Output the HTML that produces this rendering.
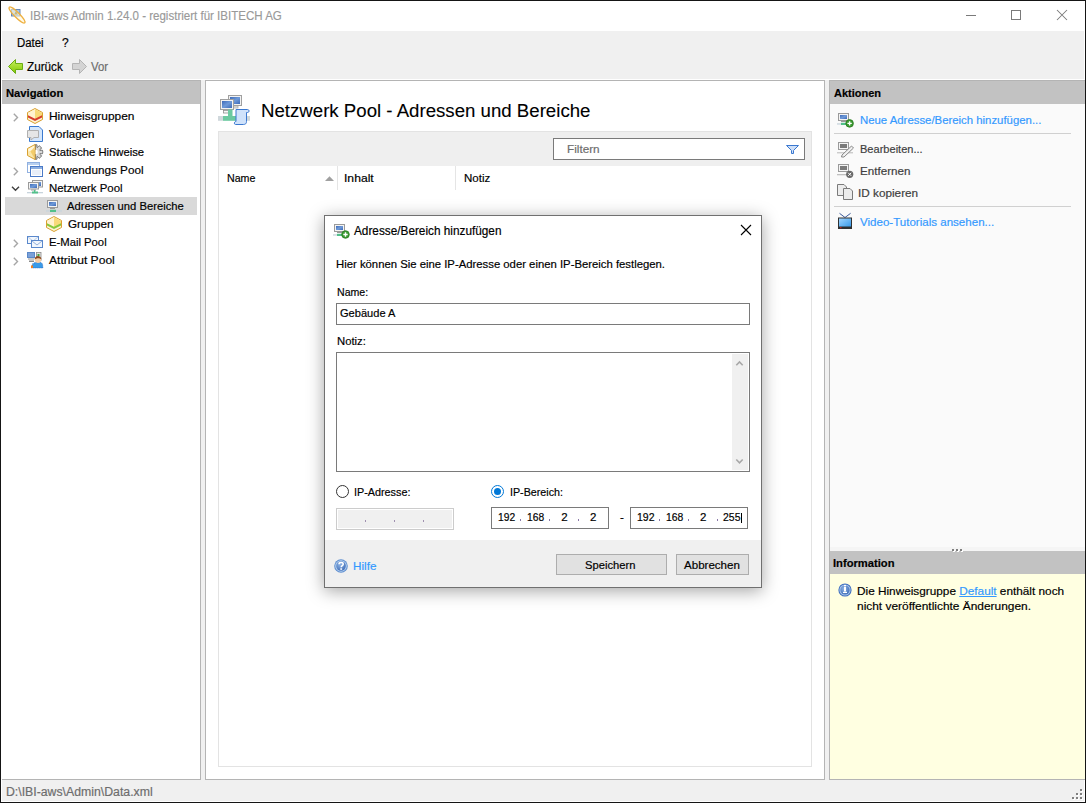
<!DOCTYPE html>
<html><head><meta charset="utf-8"><style>
html,body{margin:0;padding:0;width:1086px;height:803px;overflow:hidden;background:#f0f0f0}
.b{position:absolute}
.t{position:absolute;white-space:pre;font-family:'Liberation Sans';-webkit-text-stroke:0.18px currentColor}
svg{position:absolute;overflow:visible}
</style></head><body>
<div class="b" style="left:0px;top:0px;width:1086px;height:803px;background:#151515"></div>
<div class="b" style="left:1px;top:1px;width:1084px;height:801px;background:#fff"></div>
<div class="b" style="left:2px;top:31px;width:1082px;height:770px;background:#f0f0f0"></div>
<div class="b" style="left:2px;top:79px;width:1082px;height:1px;background:#fff"></div>
<div class="b" style="left:2px;top:80px;width:199px;height:700px;background:#fff;border-top:1px solid #b4b4b4;border-right:1px solid #b4b4b4;border-bottom:1px solid #b4b4b4;box-sizing:border-box"></div>
<div class="b" style="left:2px;top:81px;width:198px;height:23px;background:#c2c2c2"></div>
<div class="b" style="left:5px;top:197px;width:192px;height:18px;background:#d9d9d9"></div>
<div class="b" style="left:205px;top:80px;width:620px;height:700px;background:#fff;border:1px solid #b4b4b4;box-sizing:border-box"></div>
<div class="b" style="left:218px;top:131px;width:594px;height:636px;border:1px solid #e3e3e3;box-sizing:border-box"></div>
<div class="b" style="left:219px;top:132px;width:592px;height:34px;background:#efefef"></div>
<div class="b" style="left:553px;top:138px;width:252px;height:22px;background:#fff;border:1px solid #7a7a7a;box-sizing:border-box"></div>
<div class="b" style="left:337px;top:166px;width:1px;height:24px;background:#e5e5e5"></div>
<div class="b" style="left:455px;top:166px;width:1px;height:24px;background:#e5e5e5"></div>
<div class="b" style="left:829px;top:80px;width:256px;height:467px;background:#fafafa;border-top:1px solid #b4b4b4;border-left:1px solid #b4b4b4;box-sizing:border-box"></div>
<div class="b" style="left:830px;top:81px;width:255px;height:23px;background:#c2c2c2"></div>
<div class="b" style="left:834px;top:133px;width:237px;height:1px;background:#d0d0d0"></div>
<div class="b" style="left:834px;top:206px;width:237px;height:1px;background:#d0d0d0"></div>
<div class="b" style="left:829px;top:547px;width:256px;height:4px;background:#f5f5f5;border-left:1px solid #b4b4b4;box-sizing:border-box"></div>
<div class="b" style="left:829px;top:551px;width:256px;height:229px;background:#ffffe1;border-left:1px solid #b4b4b4;border-bottom:1px solid #b4b4b4;box-sizing:border-box"></div>
<div class="b" style="left:830px;top:551px;width:255px;height:23px;background:#c2c2c2"></div>
<div class="b" style="left:324px;top:215px;width:438px;height:373px;background:#fff;border:1px solid #707070;box-sizing:border-box;box-shadow:0 3px 16px rgba(0,0,0,0.36)"></div>
<div class="b" style="left:325px;top:540px;width:436px;height:47px;background:#f0f0f0"></div>
<div class="b" style="left:336px;top:303px;width:414px;height:22px;border:1px solid #7a7a7a;box-sizing:border-box"></div>
<div class="b" style="left:336px;top:352px;width:414px;height:120px;border:1px solid #7a7a7a;box-sizing:border-box"></div>
<div class="b" style="left:732px;top:354px;width:16px;height:116px;background:#f0f0f0"></div>
<div class="b" style="left:336px;top:508px;width:118px;height:22px;border:1px solid #cccccc;background:#f0f0f0;box-sizing:border-box;box-shadow:inset 0 0 0 1px #fff"></div>
<div class="b" style="left:491px;top:507px;width:118px;height:22px;border:1px solid #7a7a7a;background:#fff;box-sizing:border-box"></div>
<div class="b" style="left:630px;top:507px;width:118px;height:22px;border:1px solid #7a7a7a;background:#fff;box-sizing:border-box"></div>
<div class="b" style="left:556px;top:554px;width:111px;height:21px;border:1px solid #adadad;background:#e1e1e1;box-sizing:border-box"></div>
<div class="b" style="left:676px;top:554px;width:73px;height:21px;border:1px solid #adadad;background:#e1e1e1;box-sizing:border-box"></div>

<svg width="1086" height="803" style="left:0;top:0">
<defs>
<linearGradient id="gGreen" x1="0" y1="0" x2="0" y2="1"><stop offset="0" stop-color="#c8f060"/><stop offset="1" stop-color="#80c800"/></linearGradient>
<linearGradient id="gScreen" x1="0" y1="0" x2="1" y2="1"><stop offset="0" stop-color="#3d6ab8"/><stop offset="0.5" stop-color="#6f9ad8"/><stop offset="1" stop-color="#3d6ab8"/></linearGradient>
<linearGradient id="gBox" x1="0" y1="0" x2="0" y2="1"><stop offset="0" stop-color="#fff4c0"/><stop offset="1" stop-color="#f0c040"/></linearGradient>
<radialGradient id="gBlue" cx="0.4" cy="0.35" r="0.7"><stop offset="0" stop-color="#8fb4e4"/><stop offset="1" stop-color="#3f6db8"/></radialGradient>
<linearGradient id="gTV" x1="0" y1="0" x2="1" y2="1"><stop offset="0" stop-color="#9fd4ff"/><stop offset="1" stop-color="#3a9ae8"/></linearGradient>
</defs>
<!-- title bar app icon -->
<g>
 <rect x="11.5" y="9.5" width="8.5" height="6.5" fill="#a9c9ec" stroke="#5f82b0" stroke-width="0.9"/>
 <path d="M14.2 14.5 L16 10.8 L17.8 14.5 Z" fill="#7a6a18"/>
 <ellipse cx="17" cy="15" rx="11" ry="2.5" transform="rotate(45 17 15)" fill="rgba(255,245,215,0.55)" stroke="#eeb040" stroke-width="1.3"/>
</g>
<!-- title bar buttons -->
<path d="M966 15.5 H976" stroke="#7a7a7a" stroke-width="1"/>
<rect x="1011.5" y="10.5" width="9" height="9" fill="none" stroke="#7a7a7a" stroke-width="1"/>
<path d="M1057 10 L1067 20 M1067 10 L1057 20" stroke="#7a7a7a" stroke-width="1.05"/>
<!-- toolbar arrows -->
<path d="M8.5 66.5 L15.5 59.5 L15.5 63.5 L22.5 63.5 L22.5 69.5 L15.5 69.5 L15.5 73.5 Z" fill="url(#gGreen)" stroke="#6aac14" stroke-width="1" stroke-linejoin="miter"/>
<path d="M86.5 66.5 L79.5 59.5 L79.5 63.5 L72.5 63.5 L72.5 69.5 L79.5 69.5 L79.5 73.5 Z" fill="#d4d4d4" stroke="#b4b4b4" stroke-width="1"/>
<!-- tree chevrons -->
<g fill="none" stroke="#a6a6a6" stroke-width="1.4">
 <path d="M13.8 113.8 L17.5 117.5 L13.8 121.2"/>
 <path d="M13.8 167.8 L17.5 171.5 L13.8 175.2"/>
 <path d="M13.8 239.8 L17.5 243.5 L13.8 247.2"/>
 <path d="M13.8 257.8 L17.5 261.5 L13.8 265.2"/>
</g>
<path d="M12 186.8 L15.5 190.3 L19 186.8" fill="none" stroke="#404040" stroke-width="1.4"/>
<!-- Hinweisgruppen icon -->
<g>
 <path d="M35 108.5 L42.5 112.5 L42.5 119.5 L35 123.5 L27.5 119.5 L27.5 112.5 Z" fill="#fdf3cf" stroke="#d9a030" stroke-width="1"/>
 <path d="M35 109.3 L42 113 L42 116 L35 119.5 Z" fill="#f8da78"/>
 <path d="M35 109.3 L28 113 L28 116 L35 119.5 Z" fill="#fff2cf"/>
 <path d="M28 115.3 L35 118.8 L42 115.3 L42 117.6 L35 121.1 L28 117.6 Z" fill="#d63c2c"/>
</g>
<!-- Vorlagen icon -->
<g>
 <path d="M29.5 126.5 H39 L42.5 130 V141.5 H29.5 Z" fill="#d4e6fb" stroke="#3a7ad0" stroke-width="1"/>
 <path d="M27.5 130.5 H38.5 V137.5 H34 L31 140 V137.5 H27.5 Z" fill="#e6e6e6" stroke="#b0b0b0" stroke-width="1"/>
</g>
<!-- Statische Hinweise icon -->
<g>
 <path d="M35.30 144.60 L35.30 144.60 L35.43 144.60 L35.56 144.60 L35.69 144.61 L35.82 144.62 L35.94 144.63 L36.07 144.64 L36.20 144.66 L36.33 144.67 L36.46 144.69 L36.58 144.71 L36.71 144.74 L36.84 144.76 L36.96 144.79 L36.99 145.21 L37.01 145.62 L37.01 146.04 L37.00 146.45 L36.97 146.86 L36.93 147.27 L37.01 147.30 L37.09 147.33 L37.17 147.36 L37.25 147.40 L37.33 147.43 L37.41 147.47 L37.49 147.51 L37.75 147.19 L38.02 146.88 L38.31 146.58 L38.60 146.28 L38.91 146.00 L39.22 145.72 L39.33 145.79 L39.44 145.87 L39.54 145.94 L39.65 146.01 L39.75 146.09 L39.86 146.17 L39.96 146.25 L40.06 146.33 L40.15 146.42 L40.25 146.50 L40.35 146.59 L40.44 146.68 L40.53 146.77 L40.62 146.86 L40.71 146.95 L40.80 147.05 L40.88 147.15 L40.97 147.24 L41.05 147.34 L41.13 147.44 L41.21 147.55 L41.29 147.65 L41.36 147.76 L41.43 147.86 L41.51 147.97 L41.58 148.08 L41.30 148.39 L41.02 148.70 L40.72 148.99 L40.42 149.28 L40.11 149.55 L39.79 149.81 L39.83 149.89 L39.87 149.97 L39.90 150.05 L39.94 150.13 L39.97 150.21 L40.00 150.29 L40.03 150.37 L40.44 150.33 L40.85 150.30 L41.26 150.29 L41.68 150.29 L42.09 150.31 L42.51 150.34 L42.54 150.46 L42.56 150.59 L42.59 150.72 L42.61 150.84 L42.63 150.97 L42.64 151.10 L42.66 151.23 L42.67 151.36 L42.68 151.48 L42.69 151.61 L42.70 151.74 L42.70 151.87 L42.70 152.00 L42.70 152.13 L42.70 152.26 L42.69 152.39 L42.68 152.52 L42.67 152.64 L42.66 152.77 L42.64 152.90 L42.63 153.03 L42.61 153.16 L42.59 153.28 L42.56 153.41 L42.54 153.54 L42.51 153.66 L42.09 153.69 L41.68 153.71 L41.26 153.71 L40.85 153.70 L40.44 153.67 L40.03 153.63 L40.00 153.71 L39.97 153.79 L39.94 153.87 L39.90 153.95 L39.87 154.03 L39.83 154.11 L39.79 154.19 L40.11 154.45 L40.42 154.72 L40.72 155.01 L41.02 155.30 L41.30 155.61 L41.58 155.92 L41.51 156.03 L41.43 156.14 L41.36 156.24 L41.29 156.35 L41.21 156.45 L41.13 156.56 L41.05 156.66 L40.97 156.76 L40.88 156.85 L40.80 156.95 L40.71 157.05 L40.62 157.14 L40.53 157.23 L40.44 157.32 L40.35 157.41 L40.25 157.50 L40.15 157.58 L40.06 157.67 L39.96 157.75 L39.86 157.83 L39.75 157.91 L39.65 157.99 L39.54 158.06 L39.44 158.13 L39.33 158.21 L39.22 158.28 L38.91 158.00 L38.60 157.72 L38.31 157.42 L38.02 157.12 L37.75 156.81 L37.49 156.49 L37.41 156.53 L37.33 156.57 L37.25 156.60 L37.17 156.64 L37.09 156.67 L37.01 156.70 L36.93 156.73 L36.97 157.14 L37.00 157.55 L37.01 157.96 L37.01 158.38 L36.99 158.79 L36.96 159.21 L36.84 159.24 L36.71 159.26 L36.58 159.29 L36.46 159.31 L36.33 159.33 L36.20 159.34 L36.07 159.36 L35.94 159.37 L35.82 159.38 L35.69 159.39 L35.56 159.40 L35.43 159.40 L35.30 159.40 Z" fill="#d9d9d9" stroke="#5e5e5e" stroke-width="1"/>
 <circle cx="35.6" cy="152" r="2.2" fill="#fff"/>
 <path d="M27.5 148.5 L35 144.5 L35 159.5 L27.5 155.5 Z" fill="#fbe7a8" stroke="#d9a030" stroke-width="1"/>
 <path d="M28.3 149 L34.4 145.6 L34.4 149.5 L28.3 151.5 Z" fill="#fff6dc"/>
 <path d="M30.5 151.5 L34.4 147 L34.4 158.3 Z" fill="#f0c050" opacity="0.7"/>
</g>
<!-- Anwendungs Pool icon -->
<g>
 <rect x="27.5" y="162.5" width="12" height="10" fill="#fff" stroke="#90b0e0" stroke-width="1"/>
 <rect x="28" y="163" width="11" height="2" fill="#b8d0f0"/>
 <rect x="30.5" y="166.5" width="12" height="10" fill="#fff" stroke="#4a7ac8" stroke-width="1"/>
 <rect x="31" y="167" width="11" height="2" fill="#8fb0e0"/>
 <rect x="32" y="170" width="9" height="5" fill="#e8eef8"/>
</g>
<!-- Netzwerk Pool icon -->
<g>
 <rect x="32.5" y="180.5" width="10" height="6.5" fill="#f4f4f4" stroke="#9a9a9a" stroke-width="1"/>
 <rect x="34" y="182" width="7" height="4" fill="url(#gScreen)"/>
 <rect x="28.5" y="182.5" width="10" height="6.5" fill="#f4f4f4" stroke="#9a9a9a" stroke-width="1"/>
 <rect x="30" y="184" width="7" height="4" fill="url(#gScreen)"/>
 <rect x="31" y="189.5" width="5" height="1" fill="#9a9a9a"/>
 <rect x="27" y="192" width="16" height="1.3" fill="#c8d4dc"/>
 <rect x="32" y="191.5" width="6" height="2" fill="#52c08a"/>
 <rect x="34" y="190" width="1.3" height="2" fill="#52c08a"/>
</g>
<!-- Adressen icon -->
<g>
 <rect x="47.5" y="200.5" width="10" height="7" fill="#f4f4f4" stroke="#9a9a9a" stroke-width="1"/>
 <rect x="49" y="202" width="7" height="4" fill="url(#gScreen)"/>
 <rect x="50" y="208" width="5" height="1" fill="#9a9a9a"/>
 <rect x="46" y="210.3" width="16" height="1.3" fill="#c8d4dc"/>
 <rect x="50" y="209.8" width="6" height="2.2" fill="#52c08a"/>
</g>
<!-- Gruppen icon -->
<g>
 <path d="M54 216.5 L61.5 220.5 L61.5 227.5 L54 231.5 L46.5 227.5 L46.5 220.5 Z" fill="#fdf3cf" stroke="#d9a030" stroke-width="1"/>
 <path d="M54 217.3 L61 221 L61 224 L54 227.5 Z" fill="#f8da78"/>
 <path d="M54 217.3 L47 221 L47 224 L54 227.5 Z" fill="#fff2cf"/>
 <path d="M47 223.3 L54 226.8 L61 223.3 L61 225.6 L54 229.1 L47 225.6 Z" fill="#86c83a"/>
</g>
<!-- E-Mail Pool icon -->
<g>
 <rect x="27.5" y="236.5" width="11" height="7" fill="#f2f7fd" stroke="#5a88cc" stroke-width="1"/>
 <path d="M28 237 L33 241 L38 237" fill="none" stroke="#a8c0e0" stroke-width="0.8"/>
 <rect x="31.5" y="240.5" width="11" height="7" fill="#f2f7fd" stroke="#5a88cc" stroke-width="1"/>
 <path d="M32 241 L37 245 L42 241" fill="none" stroke="#7a9cd0" stroke-width="0.8"/>
</g>
<!-- Attribut Pool icon -->
<g>
 <rect x="27" y="252" width="8" height="6" fill="#5a88c8"/>
 <rect x="28" y="253" width="6" height="4" fill="#7aa0d8"/>
 <rect x="28" y="258" width="6" height="2" fill="#c8c8c8"/>
 <rect x="29" y="260.5" width="5" height="1.5" fill="#8a8a8a"/>
 <rect x="36.5" y="252.5" width="4.5" height="8" fill="#e4e4e4" stroke="#8a8a8a" stroke-width="0.8"/>
 <rect x="37.5" y="254" width="2" height="2" fill="#40a040"/>
 <path d="M31.5 268 L32.5 263.8 L35.5 262.3 L40.5 262.3 L42.5 263.8 L43 268 Z" fill="#3a9ae8" stroke="#2050b0" stroke-width="0.6" stroke-dasharray="1 1"/>
 <circle cx="38" cy="259.8" r="3.1" fill="#f6cda6"/>
 <path d="M34.6 259.8 C34.4 254.8 41.6 254.8 41.4 259.8 C40.5 257.8 36 257.8 34.6 259.8 Z" fill="#8b4a1c"/>
 <rect x="31" y="265.5" width="2" height="2.5" fill="#f08020"/>
</g>
<!-- big network icon -->
<g>
 <rect x="228.5" y="95.5" width="13" height="10" fill="#f2f2f2" stroke="#a0a0a0" stroke-width="1"/>
 <rect x="230" y="97" width="10" height="7" fill="url(#gScreen)"/>
 <rect x="232" y="106" width="6" height="2" fill="#e8e8e8" stroke="#a0a0a0" stroke-width="0.7"/>
 <rect x="220.5" y="99.5" width="13" height="10" fill="#f2f2f2" stroke="#a0a0a0" stroke-width="1"/>
 <rect x="222" y="101" width="10" height="7" fill="url(#gScreen)"/>
 <rect x="223.5" y="110.5" width="7" height="2.5" fill="#f8f8f8" stroke="#909090" stroke-width="0.8"/>
 <rect x="228" y="109.5" width="4.5" height="7" fill="#6cc9a0"/>
 <rect x="218" y="116" width="5" height="4.8" fill="#d0d8dc"/>
 <rect x="223" y="116" width="14" height="4.8" fill="#6cc9a0"/>
 <rect x="247" y="116" width="3" height="4.8" fill="#d0d8dc"/>
 <path d="M236 109.5 H247.5 C249.5 109.5 249.5 112.5 247.5 112.5 L246.5 112.5 V121.5 C246.5 124.5 244 124.5 243 124.5 H235.5 C234 124.5 234 122 235.5 121.5 L236 121.5 Z" fill="#cfe2fb" stroke="#3a78d0" stroke-width="1"/>
</g>
<!-- sort triangle -->
<path d="M325 181 L334 181 L329.5 176.3 Z" fill="#a0a0a0"/>
<!-- funnel -->
<path d="M786.5 145.5 L798.5 145.5 L793.5 150.5 L793.5 153.5 L791.5 153.5 L791.5 150.5 Z" fill="#cfe0f8" stroke="#3a78d0" stroke-width="1" stroke-linejoin="round"/>
<!-- actions icons -->
<g>
 <rect x="838.5" y="113.5" width="10" height="7" fill="#f4f4f4" stroke="#9a9a9a" stroke-width="1"/>
 <rect x="840" y="115" width="7" height="4" fill="url(#gScreen)"/>
 <rect x="841" y="121" width="5" height="1" fill="#9a9a9a"/>
 <rect x="837" y="123.3" width="9" height="1.3" fill="#c8d4dc"/>
 <rect x="841" y="122.8" width="5" height="2.2" fill="#52c08a"/>
 <circle cx="849.6" cy="123.4" r="3.8" fill="#3a9a30" stroke="#2a7a20" stroke-width="0.8"/>
 <path d="M849.6 121.2 V125.6 M847.4 123.4 H851.8" stroke="#fff" stroke-width="1.4"/>
</g>
<g>
 <rect x="838.5" y="142.5" width="10" height="7" fill="#f4f4f4" stroke="#9a9a9a" stroke-width="1"/>
 <rect x="840" y="144" width="7" height="4" fill="#7a7a7a"/>
 <rect x="837" y="152.3" width="16" height="1" fill="#b8b8b8"/>
 <path d="M851.5 146 L853.5 148 L844 157 L841.5 157 L842 155 Z" fill="#f0f0f0" stroke="#7a7a7a" stroke-width="0.9"/>
</g>
<g>
 <rect x="838.5" y="164.5" width="10" height="7" fill="#f4f4f4" stroke="#9a9a9a" stroke-width="1"/>
 <rect x="840" y="166" width="7" height="4" fill="#7a7a7a"/>
 <rect x="837" y="174" width="10" height="1.3" fill="#c0c0c0"/>
 <circle cx="849.7" cy="174.3" r="3.6" fill="#6a6a6a"/>
 <path d="M848.2 172.8 L851.2 175.8 M851.2 172.8 L848.2 175.8" stroke="#fff" stroke-width="1"/>
</g>
<g>
 <path d="M837.5 184.5 H844 L846.5 187 V195.5 H837.5 Z" fill="#ececec" stroke="#7a7a7a" stroke-width="1"/>
 <path d="M843.5 188.5 H850 L852.5 191 V199.5 H843.5 Z" fill="#ececec" stroke="#7a7a7a" stroke-width="1"/>
</g>
<g>
 <path d="M839.5 213.3 L845 217.5 L850.6 213.3" fill="none" stroke="#3a5a9a" stroke-width="1"/>
 <rect x="838" y="217.5" width="14" height="11.5" fill="#303030"/>
 <rect x="839" y="218.5" width="12" height="8" fill="url(#gTV)"/>
 <rect x="840" y="227.2" width="1.5" height="1" fill="#e02020"/>
</g>
<!-- info icon -->
<g>
 <circle cx="845" cy="590" r="6.6" fill="#3f6fbf"/>
 <circle cx="845" cy="590" r="5.6" fill="#a9c6ea"/>
 <circle cx="845" cy="590" r="4.6" fill="url(#gBlue)"/>
 <rect x="844" y="587" width="2" height="4.5" fill="#fff"/>
 <rect x="843" y="591.8" width="4" height="1.2" fill="#fff"/>
 <rect x="844" y="585" width="2" height="1.4" fill="#fff"/>
</g>
<!-- grip dots -->
<g fill="#ffffff"><rect x="953" y="550" width="2" height="2"/><rect x="957" y="550" width="2" height="2"/><rect x="961" y="550" width="2" height="2"/><rect x="1081" y="790" width="2" height="2"/><rect x="1077" y="794" width="2" height="2"/><rect x="1081" y="794" width="2" height="2"/><rect x="1073" y="798" width="2" height="2"/><rect x="1077" y="798" width="2" height="2"/><rect x="1081" y="798" width="2" height="2"/></g>
<g fill="#808080"><rect x="952" y="549" width="2" height="2"/><rect x="956" y="549" width="2" height="2"/><rect x="960" y="549" width="2" height="2"/><rect x="1080" y="789" width="2" height="2"/><rect x="1076" y="793" width="2" height="2"/><rect x="1080" y="793" width="2" height="2"/><rect x="1072" y="797" width="2" height="2"/><rect x="1076" y="797" width="2" height="2"/><rect x="1080" y="797" width="2" height="2"/></g>
<!-- dialog icons -->
<g>
 <rect x="334.5" y="224.5" width="10" height="7" fill="#f4f4f4" stroke="#9a9a9a" stroke-width="1"/>
 <rect x="336" y="226" width="7" height="4" fill="url(#gScreen)"/>
 <rect x="337" y="232" width="5" height="1" fill="#9a9a9a"/>
 <rect x="333" y="234.3" width="9" height="1.3" fill="#c8d4dc"/>
 <rect x="337" y="233.8" width="5" height="2.2" fill="#52c08a"/>
 <circle cx="345.5" cy="234.5" r="3.8" fill="#3a9a30" stroke="#2a7a20" stroke-width="0.8"/>
 <path d="M345.5 232.3 V236.7 M343.3 234.5 H347.7" stroke="#fff" stroke-width="1.4"/>
</g>
<path d="M741 225 L751 235 M751 225 L741 235" stroke="#000" stroke-width="1.1"/>
<path d="M736.3 365.3 L739.5 362 L742.7 365.3" fill="none" stroke="#a8a8a8" stroke-width="1.6"/>
<path d="M736.3 459.5 L739.5 462.8 L742.7 459.5" fill="none" stroke="#a8a8a8" stroke-width="1.6"/>
<circle cx="342.5" cy="491.5" r="6" fill="#fff" stroke="#333" stroke-width="1"/>
<circle cx="497.5" cy="491.5" r="6" fill="#fff" stroke="#0078d7" stroke-width="1"/>
<circle cx="497.5" cy="491.5" r="3.5" fill="#0078d7"/>
<g fill="#a090b0">
 <rect x="365" y="520" width="1" height="2"/><rect x="394" y="520" width="1" height="2"/><rect x="423" y="520" width="1" height="2"/>
</g>
<rect x="741" y="513" width="1" height="10" fill="#000"/>
<g fill="#8a78a8">
 <rect x="520" y="519" width="1" height="2"/><rect x="549" y="519" width="1" height="2"/><rect x="578" y="519" width="1" height="2"/>
 <rect x="659" y="519" width="1" height="2"/><rect x="688" y="519" width="1" height="2"/><rect x="717" y="519" width="1" height="2"/>
</g>
<g>
 <circle cx="341" cy="566" r="6.8" fill="#5f8fd0"/>
 <circle cx="341" cy="566" r="5.8" fill="#b8d2f0"/>
 <circle cx="341" cy="566" r="4.8" fill="url(#gBlue)"/>
 <path d="M339 564.2 C339 562 343.2 562 343.2 564.2 C343.2 565.6 341.2 565.6 341.2 567.3" fill="none" stroke="#fff" stroke-width="1.5"/>
 <rect x="340.3" y="568.3" width="1.8" height="1.5" fill="#fff"/>
</g>
</svg>

<div class="t" style="left:29.54px;top:9px;font-size:12px;line-height:14px;font-weight:normal;color:#999;letter-spacing:0.000px;transform:scaleX(0.9608);transform-origin:0 0;-webkit-text-stroke:0.15px currentColor">IBI-aws Admin 1.24.0 - registriert für IBITECH AG</div>
<div class="t" style="left:16.60px;top:36px;font-size:12px;line-height:14px;font-weight:normal;color:#000;letter-spacing:0.000px;transform:scaleX(0.9507);transform-origin:0 0;">Datei</div>
<div class="t" style="left:62.00px;top:36px;font-size:12px;line-height:14px;font-weight:normal;color:#000;letter-spacing:0.000px;">?</div>
<div class="t" style="left:27.10px;top:60px;font-size:12px;line-height:14px;font-weight:normal;color:#000;letter-spacing:0.000px;transform:scaleX(0.9768);transform-origin:0 0;">Zurück</div>
<div class="t" style="left:90.80px;top:60px;font-size:12px;line-height:14px;font-weight:normal;color:#6d6d6d;letter-spacing:0.000px;transform:scaleX(0.9436);transform-origin:0 0;">Vor</div>
<div class="t" style="left:5.50px;top:86px;font-size:11.5px;line-height:14px;font-weight:bold;color:#000;letter-spacing:0.000px;transform:scaleX(0.9751);transform-origin:0 0;">Navigation</div>
<div class="t" style="left:48.70px;top:109px;font-size:11.5px;line-height:14px;font-weight:normal;color:#000;letter-spacing:0.000px;transform:scaleX(1.0357);transform-origin:0 0;">Hinweisgruppen</div>
<div class="t" style="left:48.70px;top:127px;font-size:11.5px;line-height:14px;font-weight:normal;color:#000;letter-spacing:0.000px;transform:scaleX(0.9999);transform-origin:0 0;">Vorlagen</div>
<div class="t" style="left:48.70px;top:145px;font-size:11.5px;line-height:14px;font-weight:normal;color:#000;letter-spacing:0.000px;transform:scaleX(0.9787);transform-origin:0 0;">Statische Hinweise</div>
<div class="t" style="left:48.70px;top:163px;font-size:11.5px;line-height:14px;font-weight:normal;color:#000;letter-spacing:0.000px;transform:scaleX(1.0200);transform-origin:0 0;">Anwendungs Pool</div>
<div class="t" style="left:48.70px;top:181px;font-size:11.5px;line-height:14px;font-weight:normal;color:#000;letter-spacing:0.000px;transform:scaleX(0.9921);transform-origin:0 0;">Netzwerk Pool</div>
<div class="t" style="left:67.30px;top:199px;font-size:11.5px;line-height:14px;font-weight:normal;color:#000;letter-spacing:0.000px;transform:scaleX(0.9769);transform-origin:0 0;">Adressen und Bereiche</div>
<div class="t" style="left:67.50px;top:217px;font-size:11.5px;line-height:14px;font-weight:normal;color:#000;letter-spacing:0.000px;transform:scaleX(1.0145);transform-origin:0 0;">Gruppen</div>
<div class="t" style="left:48.70px;top:235px;font-size:11.5px;line-height:14px;font-weight:normal;color:#000;letter-spacing:0.000px;transform:scaleX(0.9804);transform-origin:0 0;">E-Mail Pool</div>
<div class="t" style="left:48.50px;top:253px;font-size:11.5px;line-height:14px;font-weight:normal;color:#000;letter-spacing:0.000px;transform:scaleX(1.0501);transform-origin:0 0;">Attribut Pool</div>
<div class="t" style="left:261.36px;top:101px;font-size:18px;line-height:20px;font-weight:normal;color:#000;letter-spacing:0.000px;transform:scaleX(1.0354);transform-origin:0 0;-webkit-text-stroke:0.1px currentColor">Netzwerk Pool - Adressen und Bereiche</div>
<div class="t" style="left:567.30px;top:142px;font-size:11.5px;line-height:14px;font-weight:normal;color:#6d6d6d;letter-spacing:0.000px;transform:scaleX(1.0204);transform-origin:0 0;">Filtern</div>
<div class="t" style="left:226.80px;top:171px;font-size:11.5px;line-height:14px;font-weight:normal;color:#000;letter-spacing:0.000px;transform:scaleX(0.9247);transform-origin:0 0;">Name</div>
<div class="t" style="left:344.14px;top:171px;font-size:11.5px;line-height:14px;font-weight:normal;color:#000;letter-spacing:0.000px;transform:scaleX(1.0559);transform-origin:0 0;">Inhalt</div>
<div class="t" style="left:463.50px;top:171px;font-size:11.5px;line-height:14px;font-weight:normal;color:#000;letter-spacing:0.000px;transform:scaleX(1.0019);transform-origin:0 0;">Notiz</div>
<div class="t" style="left:833.50px;top:86px;font-size:11.5px;line-height:14px;font-weight:bold;color:#000;letter-spacing:0.000px;transform:scaleX(0.9559);transform-origin:0 0;">Aktionen</div>
<div class="t" style="left:859.50px;top:113px;font-size:11.5px;line-height:14px;font-weight:normal;color:#3399ff;letter-spacing:0.000px;transform:scaleX(0.9885);transform-origin:0 0;">Neue Adresse/Bereich hinzufügen...</div>
<div class="t" style="left:859.50px;top:142px;font-size:11.5px;line-height:14px;font-weight:normal;color:#404040;letter-spacing:0.000px;transform:scaleX(0.9613);transform-origin:0 0;">Bearbeiten...</div>
<div class="t" style="left:859.50px;top:164px;font-size:11.5px;line-height:14px;font-weight:normal;color:#404040;letter-spacing:0.000px;transform:scaleX(1.0106);transform-origin:0 0;">Entfernen</div>
<div class="t" style="left:858.48px;top:186px;font-size:11.5px;line-height:14px;font-weight:normal;color:#404040;letter-spacing:0.000px;transform:scaleX(1.0224);transform-origin:0 0;">ID kopieren</div>
<div class="t" style="left:859.50px;top:215px;font-size:11.5px;line-height:14px;font-weight:normal;color:#3399ff;letter-spacing:0.000px;transform:scaleX(1.0044);transform-origin:0 0;">Video-Tutorials ansehen...</div>
<div class="t" style="left:833.10px;top:556px;font-size:11.5px;line-height:14px;font-weight:bold;color:#000;letter-spacing:0.000px;transform:scaleX(0.9728);transform-origin:0 0;">Information</div>
<div class="t" style="left:857.40px;top:584px;font-size:11.5px;line-height:14px;font-weight:normal;color:#000;letter-spacing:0.000px;transform:scaleX(1.0252);transform-origin:0 0;">Die Hinweisgruppe <span style="color:#3399ff;text-decoration:underline">Default</span> enthält noch</div>
<div class="t" style="left:857.40px;top:599px;font-size:11.5px;line-height:14px;font-weight:normal;color:#000;letter-spacing:0.000px;transform:scaleX(1.0362);transform-origin:0 0;">nicht veröffentlichte Änderungen.</div>
<div class="t" style="left:5.50px;top:785px;font-size:12px;line-height:14px;font-weight:normal;color:#6d6d6d;letter-spacing:0.000px;transform:scaleX(1.0231);transform-origin:0 0;">D:\IBI-aws\Admin\Data.xml</div>
<div class="t" style="left:354.20px;top:224px;font-size:12px;line-height:14px;font-weight:normal;color:#000;letter-spacing:0.000px;transform:scaleX(0.9825);transform-origin:0 0;">Adresse/Bereich hinzufügen</div>
<div class="t" style="left:336.40px;top:257px;font-size:11.5px;line-height:14px;font-weight:normal;color:#000;letter-spacing:0.000px;transform:scaleX(0.9840);transform-origin:0 0;">Hier können Sie eine IP-Adresse oder einen IP-Bereich festlegen.</div>
<div class="t" style="left:336.60px;top:285px;font-size:11.5px;line-height:14px;font-weight:normal;color:#000;letter-spacing:0.000px;transform:scaleX(0.9205);transform-origin:0 0;">Name:</div>
<div class="t" style="left:339.50px;top:306px;font-size:11.5px;line-height:14px;font-weight:normal;color:#000;letter-spacing:0.000px;transform:scaleX(0.9622);transform-origin:0 0;">Gebäude A</div>
<div class="t" style="left:336.60px;top:334px;font-size:11.5px;line-height:14px;font-weight:normal;color:#000;letter-spacing:0.000px;transform:scaleX(0.9829);transform-origin:0 0;">Notiz:</div>
<div class="t" style="left:354.36px;top:485px;font-size:11.5px;line-height:14px;font-weight:normal;color:#000;letter-spacing:0.000px;transform:scaleX(0.9392);transform-origin:0 0;">IP-Adresse:</div>
<div class="t" style="left:509.77px;top:485px;font-size:11.5px;line-height:14px;font-weight:normal;color:#000;letter-spacing:0.000px;transform:scaleX(0.9302);transform-origin:0 0;">IP-Bereich:</div>
<div class="t" style="left:352.80px;top:559px;font-size:11.5px;line-height:14px;font-weight:normal;color:#3399ff;letter-spacing:0.000px;transform:scaleX(1.0173);transform-origin:0 0;">Hilfe</div>
<div class="t" style="left:585.40px;top:558px;font-size:11.5px;line-height:14px;font-weight:normal;color:#000;letter-spacing:0.000px;transform:scaleX(0.9730);transform-origin:0 0;">Speichern</div>
<div class="t" style="left:684.40px;top:558px;font-size:11.5px;line-height:14px;font-weight:normal;color:#000;letter-spacing:0.000px;transform:scaleX(1.0049);transform-origin:0 0;">Abbrechen</div>
<div class="t" style="left:497.80px;top:510px;font-size:11.5px;line-height:14px;font-weight:normal;color:#000;letter-spacing:0.000px;transform:scaleX(0.8940);transform-origin:0 0;">192</div>
<div class="t" style="left:526.90px;top:510px;font-size:11.5px;line-height:14px;font-weight:normal;color:#000;letter-spacing:0.000px;transform:scaleX(0.8940);transform-origin:0 0;">168</div>
<div class="t" style="left:561.30px;top:510px;font-size:11.5px;line-height:14px;font-weight:normal;color:#000;letter-spacing:0.000px;">2</div>
<div class="t" style="left:590.00px;top:510px;font-size:11.5px;line-height:14px;font-weight:normal;color:#000;letter-spacing:0.000px;">2</div>
<div class="t" style="left:636.60px;top:510px;font-size:11.5px;line-height:14px;font-weight:normal;color:#000;letter-spacing:0.000px;transform:scaleX(0.9153);transform-origin:0 0;">192</div>
<div class="t" style="left:665.90px;top:510px;font-size:11.5px;line-height:14px;font-weight:normal;color:#000;letter-spacing:0.000px;transform:scaleX(0.9047);transform-origin:0 0;">168</div>
<div class="t" style="left:700.00px;top:510px;font-size:11.5px;line-height:14px;font-weight:normal;color:#000;letter-spacing:0.000px;">2</div>
<div class="t" style="left:723.40px;top:510px;font-size:11.5px;line-height:14px;font-weight:normal;color:#000;letter-spacing:0.000px;transform:scaleX(0.9100);transform-origin:0 0;">255</div>
<div class="t" style="left:619.90px;top:510px;font-size:11.5px;line-height:14px;font-weight:normal;color:#000;letter-spacing:0.000px;">-</div>
</body></html>
